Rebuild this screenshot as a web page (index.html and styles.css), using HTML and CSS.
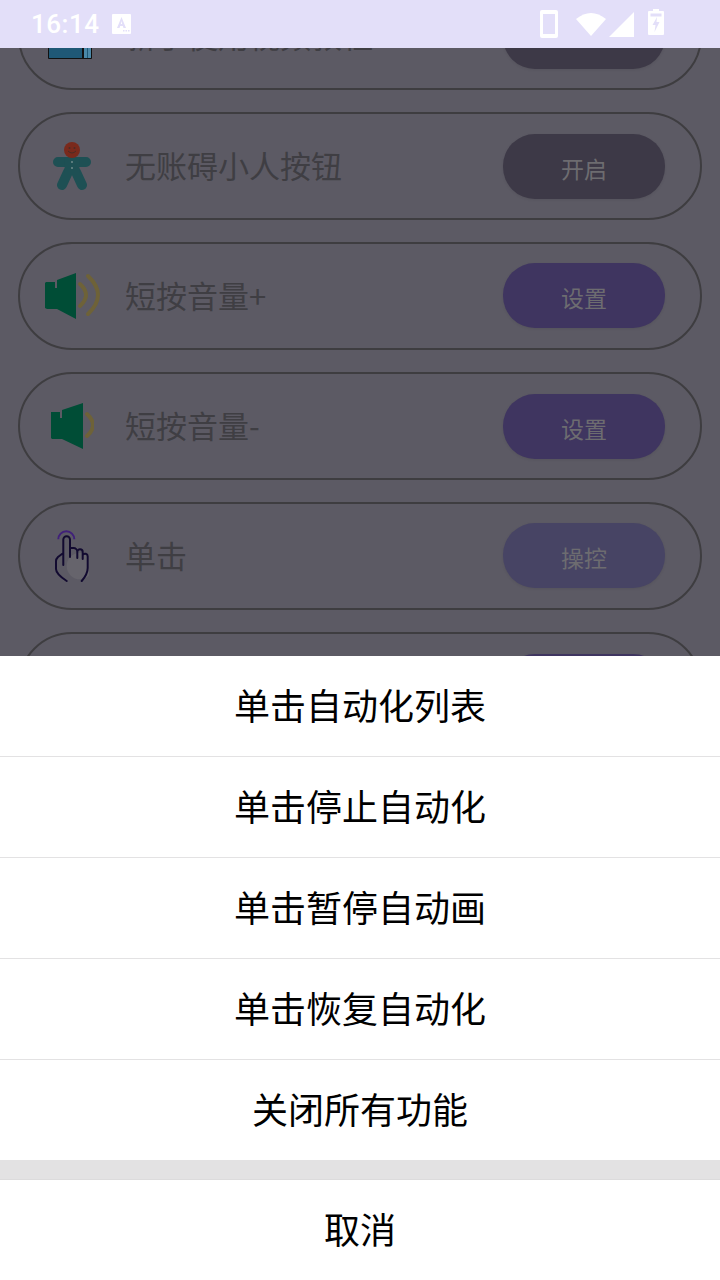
FILE: index.html
```html
<!DOCTYPE html>
<html lang="zh">
<head>
  <meta charset="UTF-8" />
  <meta name="viewport" content="width=device-width, initial-scale=1.0"/>
  <title>单击</title>
  <link rel="stylesheet" href="styles.css">
</head>
<body>
  <div class="statusbar">
    <div class="status-left">
      <span class="time">16:14</span>
      <svg class="ic-a" width="19" height="20" viewBox="0 0 19 20"><path fill="#fff" fill-rule="evenodd" d="M1 0h17a1 1 0 0 1 1 1v18a1 1 0 0 1-1 1H1a1 1 0 0 1-1-1V1a1 1 0 0 1 1-1zM9.500 3L5 14h2.500l.7-2h2.600l.7 2H14zM9.500 7l.7 3H8.800zM11 16h1.500v1.500H11zM13.500 16H15v1.500h-1.500zM16 16h1.500v1.500H16z"/></svg>
    </div>
    <div class="status-right">
      <svg width="18" height="28" viewBox="0 0 18 28"><path fill="#fff" fill-rule="evenodd" d="M2 0h14a2 2 0 0 1 2 2v24a2 2 0 0 1-2 2H2a2 2 0 0 1-2-2V2a2 2 0 0 1 2-2zM3 4v20h12V4z"/></svg>
      <svg class="ic-wifi" width="30" height="24" viewBox="0 0 30 24"><path fill="#fff" d="M0 7Q15-5 30 7L15 24z"/></svg>
      <svg class="ic-signal" width="25" height="25" viewBox="0 0 25 25"><path fill="#fff" d="M25 0v25H0z"/></svg>
      <svg class="ic-batt" width="16" height="26" viewBox="0 0 16 26"><path fill="#fff" fill-rule="evenodd" d="M5 0h6v2h4a1 1 0 0 1 1 1v22a1 1 0 0 1-1 1H1a1 1 0 0 1-1-1V3a1 1 0 0 1 1-1h4zM2.500 4.500v3h11v-3zM9 8L4.500 16h3l-1 7L11.500 13H8.500z"/></svg>
    </div>
  </div>

  <div class="list-wrap">
    <div class="list">
      <div class="row">
        <span class="icon">
          <svg width="48" height="46" viewBox="0 0 48 46"><path fill="#1f5876" stroke="#111" d="M.5.5h43v45H.5z"/><path fill="#4a88a8" d="M36 1h7v44h-7z"/><path stroke="#111" stroke-width="2" d="M35 1v44"/><path stroke="#1f5876" d="M39.500 1v44"/></svg>
        </span>
        <span class="label">新手使用视频教程</span>
        <span class="btn btn-off"></span>
      </div>
      <div class="row">
        <span class="icon">
          <svg width="38" height="49" viewBox="0 0 38 49">
            <path fill="none" stroke="#1e5054" stroke-width="10" stroke-linecap="round" d="M5 20h28M15 30L9 43M23 30L29 43"/>
            <path fill="#1e5054" d="M11 16h16l-1 15H12z"/>
            <circle cx="19" cy="8" r="8" fill="#7a2a1c"/>
            <path fill="none" stroke="#4a2c26" d="M15 9q4 4 8 0"/>
            <circle cx="16.500" cy="6" r="1" fill="#4a2c26"/><circle cx="21.500" cy="6" r="1" fill="#4a2c26"/>
            <circle cx="19" cy="20" r="1" fill="#6f8a8a"/><circle cx="19" cy="26" r="1" fill="#6f8a8a"/>
          </svg>
        </span>
        <span class="label">无账碍小人按钮</span>
        <span class="btn btn-off">开启</span>
      </div>
      <div class="row">
        <span class="icon">
          <svg width="56" height="46" viewBox="0 0 56 46">
            <path fill="#004d36" d="M2 9h9v6h2V7L32 0v46L13 36H3l-2-1V10z"/>
            <path fill="none" stroke="#6e6238" stroke-width="4" stroke-linecap="round" d="M36 11Q48 22 36 33M44 3Q64 22 44 41"/>
          </svg>
        </span>
        <span class="label">短按音量+</span>
        <span class="btn btn-set btn-up">设置</span>
      </div>
      <div class="row">
        <span class="icon">
          <svg width="44" height="46" viewBox="0 0 44 46">
            <path fill="#004d36" d="M1 9h9v6h2V7L33 0v46L12 36H2l-1-1z"/>
            <path fill="none" stroke="#6e6238" stroke-width="4" stroke-linecap="round" d="M37 11Q49 22 37 33"/>
          </svg>
        </span>
        <span class="label">短按音量-</span>
        <span class="btn btn-set">设置</span>
      </div>
      <div class="row">
        <span class="icon">
          <svg width="34" height="52" viewBox="0 0 34 52">
            <circle cx="25" cy="36" r="13.300" fill="#66646c"/>
            <path fill="none" stroke="#40207a" stroke-width="2" d="M3.300 9.300a8 8 0 0 1 16 0"/>
            <path fill="none" stroke="#120a30" stroke-width="2" stroke-linecap="round" d="M8.300 35V9.500a3.350 3.350 0 0 1 6.700 0V27M15 18h3.500a3.800 3.800 0 0 1 3.800 3.800V28M22.300 22a2.700 2.700 0 0 1 5.400 0v7M27.700 25a2.700 2.700 0 0 1 5 1.500V38q0 6-6 13M8.300 23L3 27q-2 2-2 4v8q0 5 10.700 12"/>
          </svg>
        </span>
        <span class="label">单击</span>
        <span class="btn btn-run btn-up">操控</span>
      </div>
      <div class="row">
        <span class="icon"></span>
        <span class="label"></span>
        <span class="btn btn-set"></span>
      </div>
    </div>
  </div>

  <div class="sheet">
    <div class="sheet-item">单击自动化列表</div>
    <div class="sheet-item">单击停止自动化</div>
    <div class="sheet-item">单击暂停自动画</div>
    <div class="sheet-item">单击恢复自动化</div>
    <div class="sheet-item">关闭所有功能</div>
    <div class="sheet-gap"></div>
    <div class="sheet-item sheet-cancel">取消</div>
  </div>
</body>
</html>
```

FILE: styles.css
```css
* {
  box-sizing: border-box;
}
html, body {
  margin: 0;
  height: 100%;
}
body {
  position: relative;
  display: flex;
  flex-direction: column;
  height: 1280px;
  overflow: hidden;
  background: #5c5a64;
  font-family: "Noto Sans CJK SC", "Noto Sans", sans-serif;
}
.statusbar {
  position: relative;
  z-index: 1;
  display: flex;
  justify-content: space-between;
  align-items: center;
  flex: none;
  height: 48px;
  padding: 0 56px 0 31px;
  background: #e3dff9;
  color: #fff;
}
.status-left, .status-right {
  display: flex;
  align-items: center;
}
.time {
  font-family: Roboto, sans-serif;
  font-size: 26px;
  font-weight: 500;
  letter-spacing: 0.5px;
}
.ic-a {
  margin-left: 13px;
}
.status-right svg {
  display: block;
}
.status-right .ic-wifi {
  margin-left: 18px;
}
.status-right .ic-signal {
  margin-left: 3px;
  margin-top: 1px;
}
.status-right .ic-batt {
  margin-left: 14px;
  margin-bottom: 4px;
}
.list-wrap {
  flex: 1;
  overflow: hidden;
  padding: 0 18px;
}
.list {
  display: flex;
  flex-direction: column;
  gap: 22px;
  margin-top: -66px;
}
.row {
  display: flex;
  align-items: center;
  flex: none;
  height: 108px;
  padding: 0 35px 0 21px;
  border: 2px solid #3e3d40;
  border-radius: 54px;
}
.icon {
  display: flex;
  justify-content: center;
  align-items: center;
  width: 62px;
  flex: none;
}
.label {
  flex: 1;
  margin-left: 22px;
  padding-bottom: 4px;
  color: #3f3e43;
  font-size: 31px;
}
.btn {
  display: flex;
  justify-content: center;
  align-items: center;
  flex: none;
  width: 162px;
  height: 65px;
  padding-top: 3px;
  border-radius: 32px;
  color: #6d6c70;
  font-size: 23px;
  box-shadow: 0 1px 3px rgba(0,0,0,0.08);
}
.btn-up {
  margin-bottom: 2px;
}
.btn-off {
  background: #3d3947;
}
.btn-set {
  background: #3f3560;
}
.btn-run {
  background: #474464;
}
.sheet {
  position: absolute;
  left: 0;
  right: 0;
  bottom: 0;
  background: #fff;
}
.sheet-item {
  display: flex;
  justify-content: center;
  align-items: center;
  height: 101px;
  padding-bottom: 4px;
  border-bottom: 1px solid #e3e2e3;
  color: #000;
  font-size: 36px;
}
.sheet-gap {
  height: 20px;
  margin-top: -1px;
  background: #e3e2e3;
  border-bottom: 1px solid #dcdbdc;
}
.sheet-cancel {
  height: 100px;
  border-bottom: none;
}
```
